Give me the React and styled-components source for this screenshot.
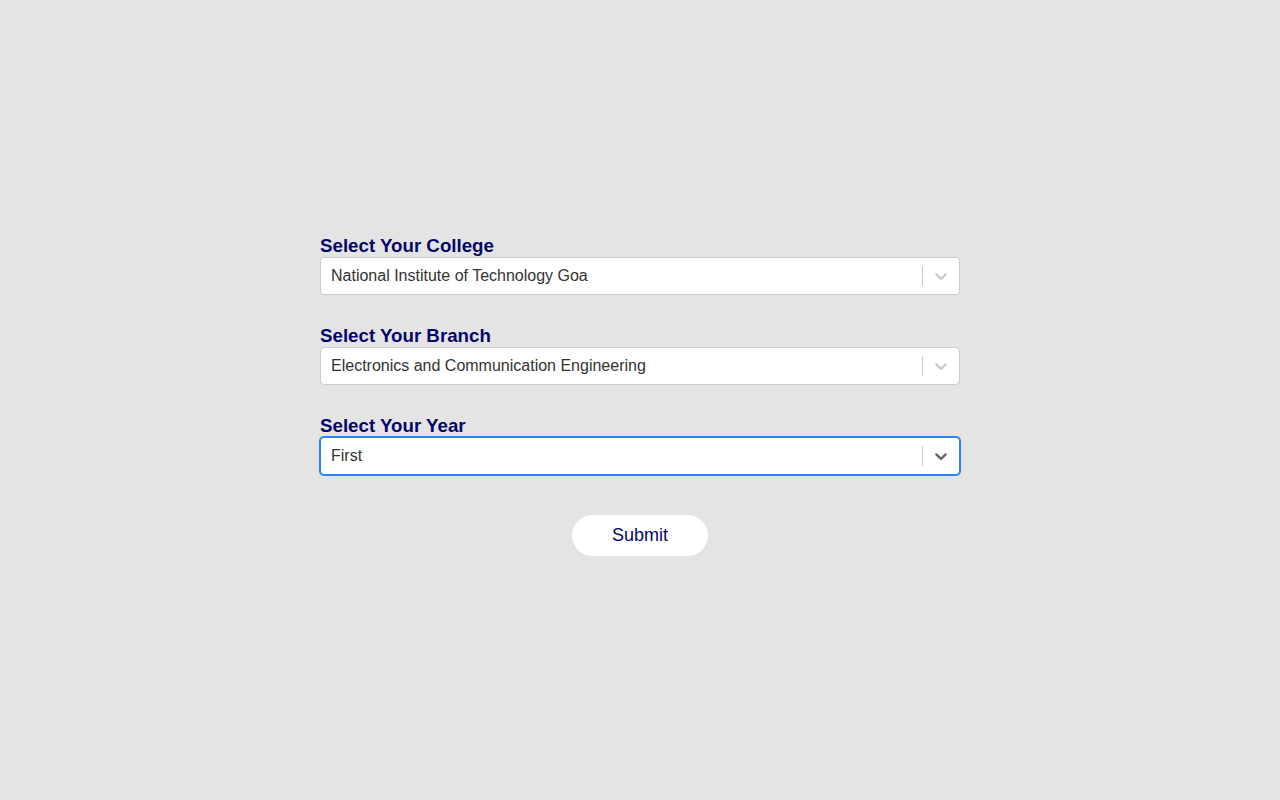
import styled, { createGlobalStyle } from "styled-components";

const GlobalStyle = createGlobalStyle`
    html, body
    {
        margin: 0;
        padding: 0;
        background-color: #e4e4e4;
        font-family: "Liberation Sans", Arial, sans-serif;
    }
`;

const fields = [
    { label: "Select Your College", value: "National Institute of Technology Goa" },
    { label: "Select Your Branch", value: "Electronics and Communication Engineering" },
    { label: "Select Your Year", value: "First", focused: true },
];

function Chevron()
{
    return (
        <svg height="20" width="20" viewBox="0 0 20 20" aria-hidden="true" focusable="false">
            <path fill="currentColor" d="M4.516 7.548c0.436-0.446 1.043-0.481 1.576 0l3.908 3.747 3.908-3.747c0.533-0.481 1.141-0.446 1.574 0 0.436 0.445 0.408 1.197 0 1.615-0.406 0.418-4.695 4.502-4.695 4.502-0.217 0.223-0.502 0.335-0.787 0.335s-0.57-0.112-0.789-0.335c0 0-4.287-4.084-4.695-4.502s-0.436-1.17 0-1.615z" />
        </svg>
    );
}

function SelectField({ label, value, focused })
{
    return (
        <Field>
            <Label>{label}</Label>
            <Control $focused={focused}>
                <ValueBox>
                    <SingleValue>{value}</SingleValue>
                </ValueBox>
                <Indicators>
                    <Separator />
                    <Dropdown $focused={focused}>
                        <Chevron />
                    </Dropdown>
                </Indicators>
            </Control>
        </Field>
    );
}

export default function App()
{
    return (
        <Page>
            <GlobalStyle />
            <Form>
                {fields.map((f) => (
                    <SelectField key={f.label} {...f} />
                ))}
                <Submit type="button">Submit</Submit>
            </Form>
        </Page>
    );
}

const Page = styled.div`
    display: flex;
    justify-content: center;
    align-items: center;
    min-height: 100vh;
`;

const Form = styled.form`
    display: flex;
    flex-direction: column;
    align-items: center;
    width: 640px;
    margin-bottom: 10px;
`;

const Field = styled.div`
    width: 100%;
    margin-bottom: 30px;
`;

const Label = styled.div`
    font-size: 18.72px;
    font-weight: 700;
    line-height: 22px;
    color: #05056b;
`;

const Control = styled.div`
    box-sizing: border-box;
    display: flex;
    align-items: center;
    justify-content: space-between;
    min-height: 38px;
    background-color: #fff;
    border: 1px solid ${(p) => (p.$focused ? "#2684ff" : "hsl(0, 0%, 80%)")};
    box-shadow: ${(p) => (p.$focused ? "0 0 0 1px #2684ff" : "none")};
    border-radius: 4px;
`;

const ValueBox = styled.div`
    flex: 1;
    padding: 2px 8px;
    overflow: hidden;
`;

const SingleValue = styled.div`
    margin: 0 2px;
    font-size: 16px;
    color: hsl(0, 0%, 20%);
    white-space: nowrap;
`;

const Indicators = styled.div`
    display: flex;
    align-items: center;
    align-self: stretch;
`;

const Separator = styled.span`
    align-self: stretch;
    width: 1px;
    margin: 8px 0;
    background-color: hsl(0, 0%, 80%);
`;

const Dropdown = styled.div`
    display: flex;
    padding: 8px;
    color: ${(p) => (p.$focused ? "hsl(0, 0%, 40%)" : "hsl(0, 0%, 80%)")};
`;

const Submit = styled.button`
    margin-top: 10px;
    padding: 10px 40px;
    border: none;
    border-radius: 21px;
    background-color: #fff;
    font-family: "Liberation Sans", Arial, sans-serif;
    font-size: 18px;
    line-height: 21px;
    color: #05056b;
    cursor: pointer;
`;
